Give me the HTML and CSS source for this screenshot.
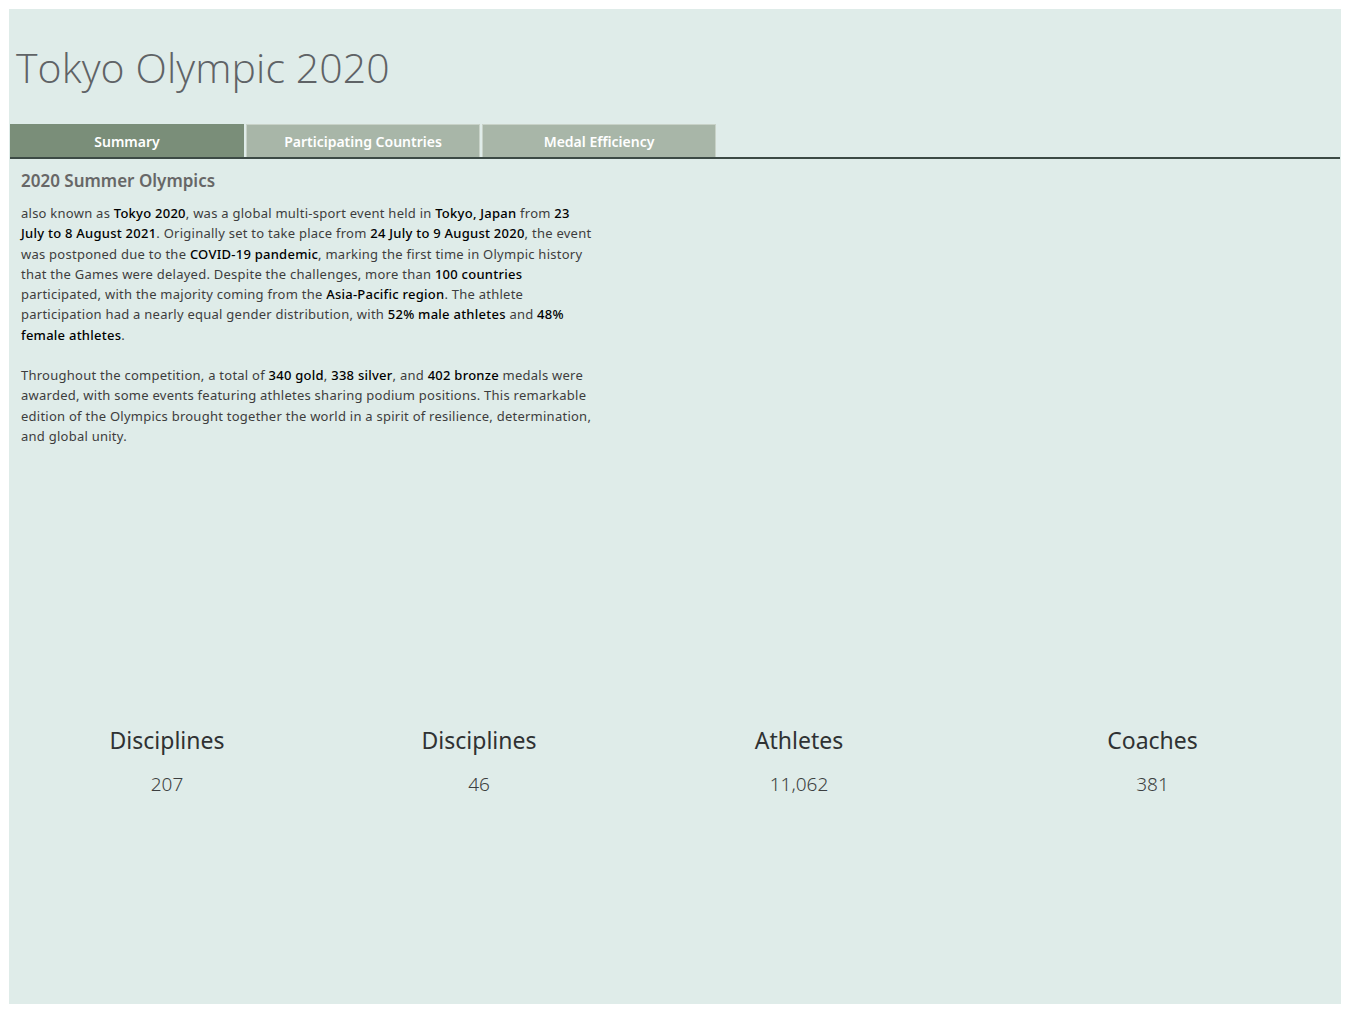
FILE: index.html
```html
<!DOCTYPE html>
<html>
<head>
<meta charset="utf-8">
<link rel="stylesheet" href="styles.css">
</head>
<body>
<div class="dashboard">
  <h1 class="title">Tokyo Olympic 2020</h1>
  <nav class="tabs">
    <div class="tab active">Summary</div>
    <div class="tab">Participating Countries</div>
    <div class="tab">Medal Efficiency</div>
  </nav>
  <section class="summary">
    <h2 class="heading">2020 Summer Olympics</h2>
    <p class="para">also known as <b>Tokyo 2020</b>, was a global multi-sport event held in <b>Tokyo, Japan</b> from <b>23<br>July to 8 August 2021</b>. Originally set to take place from <b>24 July to 9 August 2020</b>, the event<br>was postponed due to the <b>COVID-19 pandemic</b>, marking the first time in Olympic history<br>that the Games were delayed. Despite the challenges, more than <b>100 countries</b><br>participated, with the majority coming from the <b>Asia-Pacific region</b>. The athlete<br>participation had a nearly equal gender distribution, with <b>52% male athletes</b> and <b>48%<br>female athletes</b>.</p>
    <p class="para">Throughout the competition, a total of <b>340 gold</b>, <b>338 silver</b>, and <b>402 bronze</b> medals were<br>awarded, with some events featuring athletes sharing podium positions. This remarkable<br>edition of the Olympics brought together the world in a spirit of resilience, determination,<br>and global unity.</p>
  </section>
  <section class="kpis">
    <div class="kpi"><div class="kpi-label">Disciplines</div><div class="kpi-value">207</div></div>
    <div class="kpi"><div class="kpi-label">Disciplines</div><div class="kpi-value">46</div></div>
    <div class="kpi"><div class="kpi-label">Athletes</div><div class="kpi-value">11,062</div></div>
    <div class="kpi"><div class="kpi-label">Coaches</div><div class="kpi-value">381</div></div>
  </section>
</div>
</body>
</html>
```

FILE: styles.css
```css
html, body {
  margin: 0;
  padding: 0;
  background: #ffffff;
}
body {
  padding: 9px 8px 7px 9px;
  font-family: "Noto Sans", "Open Sans", sans-serif;
}
.dashboard {
  width: 1332px;
  height: 995px;
  background: #dfece9;
  box-sizing: border-box;
  padding-top: 34px;
  display: flex;
  flex-direction: column;
}
.title {
  margin: 0 0 0 7px;
  font-family: "Open Sans", sans-serif;
  font-weight: 300;
  font-size: 41px;
  line-height: 48px;
  color: #5f6366;
  letter-spacing: 0.1px;
}
.tabs {
  display: flex;
  gap: 2px;
  margin-top: 32px;
  margin-left: 1px;
  margin-right: 1px;
  border-bottom: 2px solid #3c4a45;
}
.tab {
  width: 234px;
  height: 33px;
  box-sizing: border-box;
  border: 1px solid #c8d2c8;
  border-bottom: none;
  background: #a8b6a8;
  color: #ffffff;
  font-weight: 600;
  font-size: 14px;
  display: flex;
  align-items: center;
  justify-content: center;
  margin-top: 1px;
}
.tab.active {
  background: #7a8e79;
  border-color: #7a8e79;
}
.summary {
  padding: 10px 0 0 12px;
  width: 620px;
}
.heading {
  margin: 0 0 10px 0;
  font-size: 17px;
  line-height: 24px;
  font-weight: 600;
  color: #676767;
}
.para {
  margin: 0 0 20px 0;
  font-size: 13px;
  line-height: 20.3px;
  color: #3d3d3d;
  letter-spacing: 0.25px;
}
.para b {
  font-weight: 500;
  color: #000000;
}
.kpis {
  margin-top: auto;
  margin-bottom: 208px;
  display: grid;
  grid-template-columns: 314px 310px 330px 1fr;
  margin-left: 1px;
}
.kpi {
  display: flex;
  flex-direction: column;
  align-items: center;
}
.kpi-label {
  font-size: 23px;
  line-height: 30px;
  color: #2f3233;
}
.kpi-value {
  margin-top: 17px;
  font-size: 19px;
  line-height: 24px;
  color: #3c3f40;
  font-weight: 300;
}
```
